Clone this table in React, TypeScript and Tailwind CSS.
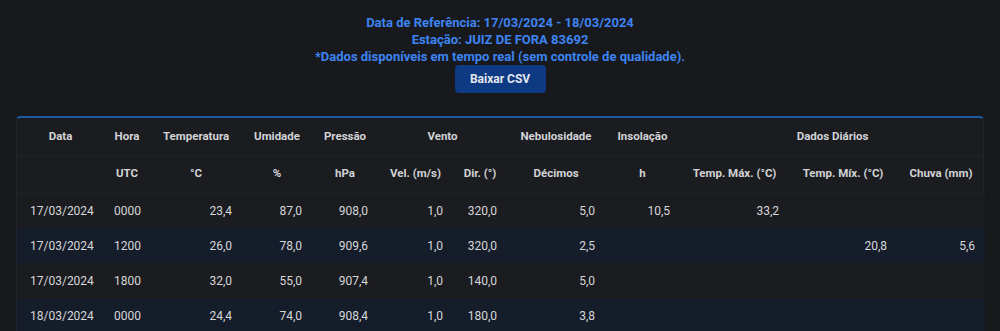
const cols = [87, 46, 92, 70, 66, 75, 54, 98, 75, 109, 108, 88];

type Row = string[];

const rows: Row[] = [
  ["17/03/2024", "0000", "23,4", "87,0", "908,0", "1,0", "320,0", "5,0", "10,5", "33,2", "", ""],
  ["17/03/2024", "1200", "26,0", "78,0", "909,6", "1,0", "320,0", "2,5", "", "", "20,8", "5,6"],
  ["17/03/2024", "1800", "32,0", "55,0", "907,4", "1,0", "140,0", "5,0", "", "", "", ""],
  ["18/03/2024", "0000", "24,4", "74,0", "908,4", "1,0", "180,0", "3,8", "", "", "", ""],
];

const th = "px-2.5 text-center font-bold text-[11.5px] text-[#d2d3d6] whitespace-nowrap";

export default function App() {
  return (
    <div
      className="min-h-[331px] bg-[#18191c] pt-[14px] overflow-hidden"
      style={{ fontFamily: "Roboto, 'Liberation Sans', sans-serif" }}
    >
      <div className="flex flex-col items-center text-[#3d84f2] font-bold text-[13px] leading-[17px]">
        <p>Data de Referência: 17/03/2024 - 18/03/2024</p>
        <p>Estação: JUIZ DE FORA 83692</p>
        <p>*Dados disponíveis em tempo real (sem controle de qualidade).</p>
        <button className="w-[91px] h-[28px] rounded-[4px] bg-[#0d3a82] text-[#e4e8f0] text-[12px] font-bold">
          Baixar CSV
        </button>
      </div>

      <div className="mx-4 mt-[23px] rounded-t-[4px] border-t-2 border-[#1d5c9c] border-x border-x-[#222328] bg-[#1b1c1f]">
        <table className="w-full table-fixed border-collapse">
          <colgroup>
            {cols.map((w, i) => (
              <col key={i} style={{ width: w }} />
            ))}
          </colgroup>
          <thead>
            <tr className="h-[37px] border-b border-[#212226]">
              <th className={th}>Data</th>
              <th className={th}>Hora</th>
              <th className={th}>Temperatura</th>
              <th className={th}>Umidade</th>
              <th className={th}>Pressão</th>
              <th className={th} colSpan={2}>Vento</th>
              <th className={th}>Nebulosidade</th>
              <th className={th}>Insolação</th>
              <th className={th} colSpan={3}>Dados Diários</th>
            </tr>
            <tr className="h-[38px] border-b border-[#212226]">
              <th className={th}></th>
              <th className={th}>UTC</th>
              <th className={th}>°C</th>
              <th className={th}>%</th>
              <th className={th}>hPa</th>
              <th className={th}>Vel. (m/s)</th>
              <th className={th}>Dir. (°)</th>
              <th className={th}>Décimos</th>
              <th className={th}>h</th>
              <th className={th}>Temp. Máx. (°C)</th>
              <th className={th}>Temp. Míx. (°C)</th>
              <th className={th}>Chuva (mm)</th>
            </tr>
          </thead>
          <tbody>
            {rows.map((r, i) => (
              <tr key={i} className={`h-[35px] ${i % 2 === 1 ? "bg-[#161d2a]" : "bg-[#1b1c1f]"}`}>
                {r.map((c, j) => (
                  <td
                    key={j}
                    className={`text-[12px] text-[#d6d7da] whitespace-nowrap ${
                      j === 0 ? "pl-[13px] text-left" : j === 1 ? "pl-2.5 text-left" : "pr-2.5 text-right"
                    }`}
                  >
                    {c}
                  </td>
                ))}
              </tr>
            ))}
          </tbody>
        </table>
      </div>
    </div>
  );
}
